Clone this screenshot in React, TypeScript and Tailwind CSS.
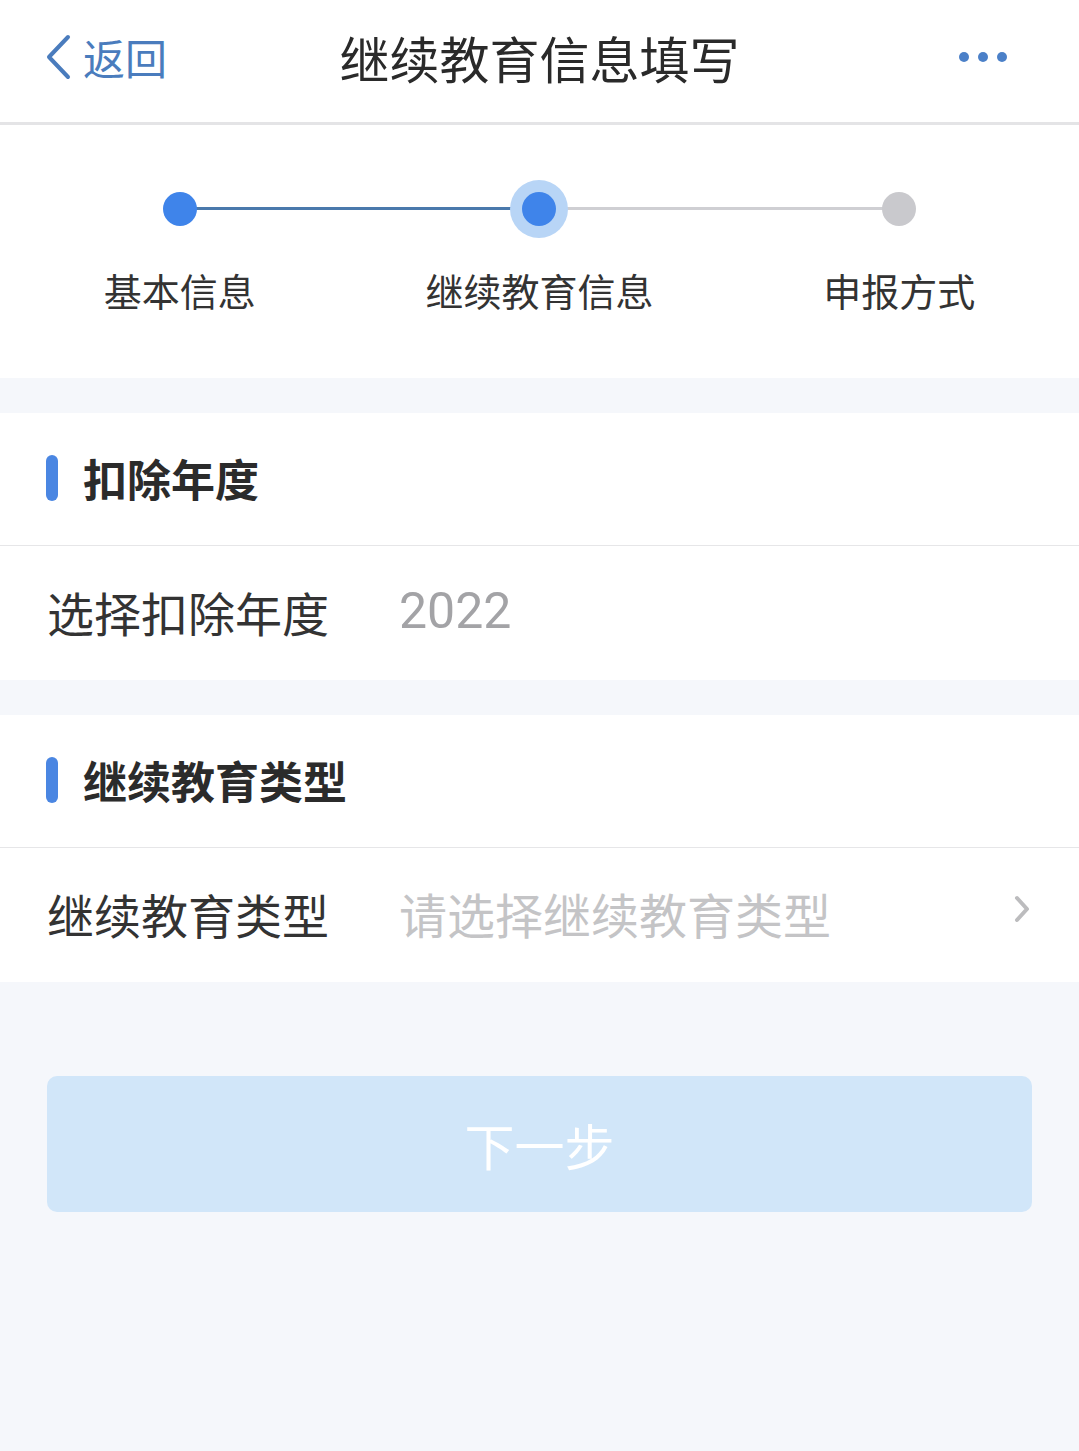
const FONT = { fontFamily: '"Noto Sans CJK SC", "Noto Sans", sans-serif' }

const STEPS = [
  { label: '基本信息', state: 'done' },
  { label: '继续教育信息', state: 'active' },
  { label: '申报方式', state: 'todo' },
]

function StepDot({ state }: { state: string }) {
  if (state === 'active') {
    return (
      <div className="w-[58px] h-[58px] rounded-full bg-[#b8d5f6] flex items-center justify-center">
        <div className="w-[34px] h-[34px] rounded-full bg-[#3f84ea]" />
      </div>
    )
  }
  return (
    <div className="w-[58px] h-[58px] flex items-center justify-center">
      <div className={`w-[34px] h-[34px] rounded-full ${state === 'done' ? 'bg-[#3f84ea]' : 'bg-[#c9c9cd]'}`} />
    </div>
  )
}

function SectionTitle({ title }: { title: string }) {
  return (
    <div className="h-[133px] flex items-center pl-[46px] pb-[2px] border-b border-[#e6e6e8]">
      <div className="w-[12px] h-[46px] rounded-full bg-[#4a86e2]" />
      <div className="ml-[25px] text-[44px] font-bold text-[#2b2b2b] leading-none">{title}</div>
    </div>
  )
}

export default function App() {
  return (
    <div className="min-h-[1451px] bg-[#f5f7fb]" style={FONT}>
      {/* nav bar */}
      <div className="h-[125px] bg-white border-b-[3px] border-[#e4e4e6] flex items-center justify-between pl-[45px] pr-[72px] pb-[8px] relative">
        <div className="flex items-center text-[#4a7cbd]">
          <svg width="26" height="46" viewBox="0 0 26 46" fill="none">
            <polyline points="23,3 4,23 23,43" stroke="currentColor" strokeWidth="4" strokeLinecap="round" strokeLinejoin="round" />
          </svg>
          <span className="text-[42px] leading-none ml-[12px]">返回</span>
        </div>
        <div className="absolute left-0 right-0 top-0 h-[114px] flex items-center justify-center pointer-events-none">
          <span className="text-[50px] leading-none text-[#2a2a2a]">继续教育信息填写</span>
        </div>
        <div className="flex items-center gap-[9px]">
          <div className="w-[10px] h-[10px] rounded-full bg-[#4b80c8]" />
          <div className="w-[10px] h-[10px] rounded-full bg-[#4b80c8]" />
          <div className="w-[10px] h-[10px] rounded-full bg-[#4b80c8]" />
        </div>
      </div>

      {/* stepper */}
      <div className="h-[253px] bg-white pt-[55px]">
        <div className="relative grid grid-cols-3">
          <div className="absolute top-[27px] left-[180px] w-[360px] h-[3px] bg-[#4a79ac]" />
          <div className="absolute top-[27px] left-[540px] w-[360px] h-[3px] bg-[#cfcfd3]" />
          {STEPS.map((s) => (
            <div key={s.label} className="relative flex flex-col items-center">
              <StepDot state={s.state} />
              <div className="mt-[33px] text-[38px] leading-none text-[#333]">{s.label}</div>
            </div>
          ))}
        </div>
      </div>

      <div className="h-[35px]" />

      {/* deduction year */}
      <div className="bg-white">
        <SectionTitle title="扣除年度" />
        <div className="h-[134px] flex items-center pl-[47px] pb-[4px]">
          <span className="w-[352px] text-[47px] leading-none text-[#333]">选择扣除年度</span>
          <span className="text-[50px] leading-none text-[#a3a3a6]" style={{ fontFamily: 'Roboto, "Noto Sans", sans-serif' }}>2022</span>
        </div>
      </div>

      <div className="h-[35px]" />

      {/* education type */}
      <div className="bg-white">
        <SectionTitle title="继续教育类型" />
        <div className="h-[134px] flex items-center pl-[47px] pr-[49px] pb-[4px]">
          <span className="w-[352px] text-[47px] leading-none text-[#333]">继续教育类型</span>
          <span className="flex-1 text-[48px] leading-none text-[#c4c4c6]">请选择继续教育类型</span>
          <svg width="16" height="28" viewBox="0 0 16 28" fill="none" className="text-[#bcbcbe] mt-[-8px]">
            <polyline points="3,3 13,14 3,25" stroke="currentColor" strokeWidth="4" strokeLinecap="round" strokeLinejoin="round" />
          </svg>
        </div>
      </div>

      {/* next button */}
      <div className="px-[47px] pt-[94px]">
        <button className="w-full h-[136px] rounded-[10px] bg-[#d1e6f9] text-white text-[50px] leading-none" style={FONT}>
          下一步
        </button>
      </div>
    </div>
  )
}
